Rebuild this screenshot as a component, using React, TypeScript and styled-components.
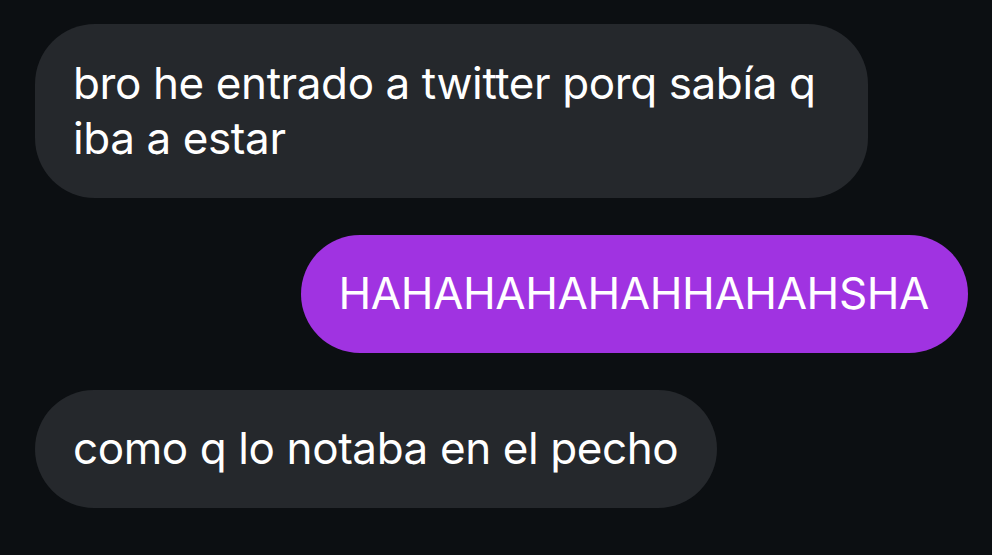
import React from "react";
import styled, { createGlobalStyle } from "styled-components";

const Global = createGlobalStyle`
  html, body {
    margin: 0;
    padding: 0;
    background: #0c0f12;
  }
  body {
    font-family: Inter, "Noto Sans", "Liberation Sans", sans-serif;
  }
`;

const Thread = styled.div`
  width: 992px;
  height: 555px;
  box-sizing: border-box;
  padding: 24px 24px 0 35px;
  display: flex;
  flex-direction: column;
  gap: 36.5px;
  background: #0c0f12;
  overflow: hidden;
`;

const Row = styled.div<{ $mine?: boolean }>`
  display: flex;
  justify-content: ${(p) => (p.$mine ? "flex-end" : "flex-start")};
`;

const Bubble = styled.div<{ $mine?: boolean }>`
  box-sizing: border-box;
  max-width: 833px;
  padding: 31.5px 39px 31.5px 38px;
  border-radius: 60px;
  background: ${(p) => (p.$mine ? "#a033e1" : "#25282c")};
  color: #ffffff;
  font-size: 44px;
  line-height: 55.5px;
  font-weight: 400;
  letter-spacing: -0.4px;
`;

export default function App() {
  return (
    <>
      <Global />
      <Thread>
        <Row>
          <Bubble>bro he entrado a twitter porq sabía q iba a estar</Bubble>
        </Row>
        <Row $mine>
          <Bubble $mine>HAHAHAHAHAHHAHAHSHA</Bubble>
        </Row>
        <Row>
          <Bubble>como q lo notaba en el pecho</Bubble>
        </Row>
      </Thread>
    </>
  );
}
